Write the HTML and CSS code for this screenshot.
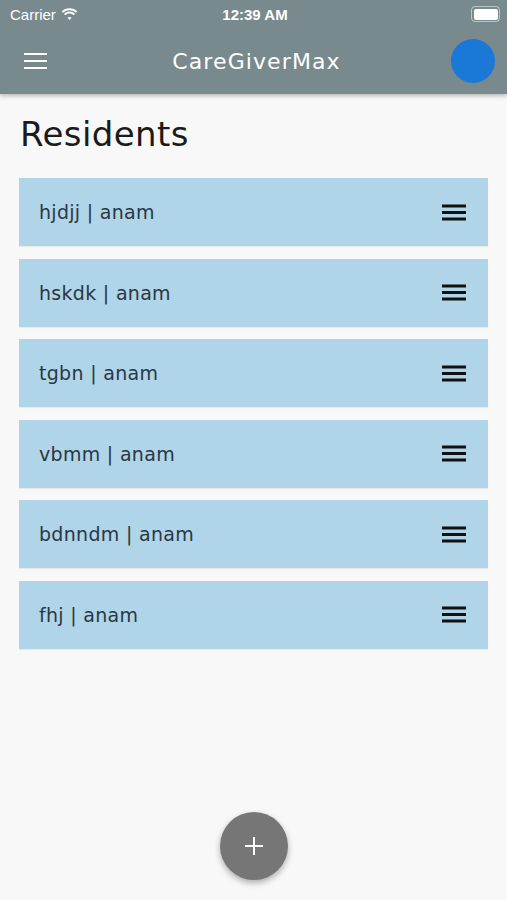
FILE: index.html
```html
<!doctype html>
<html>
  <head>
    <meta charset="utf-8">
    <title>CareGiverMax</title>
    <link rel="stylesheet" href="styles.css">
  </head>
  <body>
    <div class="top">
      <div class="status">
        <span class="carrier">Carrier
          <svg class="wifi" width="17" height="12" viewBox="0 0 17 12">
            <path d="M8.5 2.2c2.5 0 4.8 1 6.5 2.6l1.3-1.4C14.2 1.4 11.5 0.2 8.5 0.2S2.8 1.4 0.7 3.4L2 4.8C3.7 3.2 6 2.2 8.5 2.2z" fill="#fff"/>
            <path d="M8.5 5.6c1.6 0 3.1 0.6 4.2 1.7l1.3-1.4C12.6 4.5 10.6 3.6 8.5 3.6S4.4 4.5 3 5.9l1.3 1.4C5.4 6.2 6.9 5.6 8.5 5.6z" fill="#fff"/>
            <path d="M8.5 8.9c0.8 0 1.5 0.3 2 0.8l-2 2.2-2-2.2c0.5-0.5 1.2-0.8 2-0.8z" fill="#fff"/>
          </svg>
        </span>
        <span class="clock">12:39 AM</span>
        <span class="battery"><span class="cell"></span></span>
      </div>
      <div class="appbar">
        <svg class="menu" width="24" height="16" viewBox="0 0 24 16">
          <rect x="0" y="0" width="23" height="2" fill="#fff"/>
          <rect x="0" y="7" width="23" height="2" fill="#fff"/>
          <rect x="0" y="14" width="23" height="2" fill="#fff"/>
        </svg>
        <span class="brand">CareGiverMax</span>
        <span class="avatar"></span>
      </div>
    </div>

    <div class="content">
      <h1>Residents</h1>
      <div class="list">
        <div class="row"><span>hjdjj | anam</span><i class="drag"></i></div>
        <div class="row"><span>hskdk | anam</span><i class="drag"></i></div>
        <div class="row"><span>tgbn | anam</span><i class="drag"></i></div>
        <div class="row"><span>vbmm | anam</span><i class="drag"></i></div>
        <div class="row"><span>bdnndm | anam</span><i class="drag"></i></div>
        <div class="row"><span>fhj | anam</span><i class="drag"></i></div>
      </div>
    </div>

    <div class="fab">
      <svg width="20" height="20" viewBox="0 0 20 20">
        <rect x="9" y="1" width="2" height="18" fill="#fff"/>
        <rect x="1" y="9" width="18" height="2" fill="#fff"/>
      </svg>
    </div>
  </body>
</html>
```

FILE: styles.css
```css
body {
  margin: 0;
  width: 507px;
  height: 900px;
  background: #f8f8f8;
  font-family: "DejaVu Sans", "Noto Sans", sans-serif;
  position: relative;
  overflow: hidden;
}

.top {
  background: #788a8d;
  box-shadow: 0 2px 4px rgba(0, 0, 0, 0.25);
}

.status {
  height: 28px;
  display: flex;
  align-items: center;
  justify-content: space-between;
  padding: 0 7px 0 10px;
  color: #fff;
  font-family: "Liberation Sans", sans-serif;
  font-size: 15px;
}
.carrier {
  display: flex;
  align-items: center;
  gap: 5px;
  width: 90px;
}
.clock {
  font-weight: bold;
}
.battery {
  width: 90px;
  display: flex;
  justify-content: flex-end;
}
.battery .cell {
  width: 24px;
  height: 11px;
  border: 1.5px solid rgba(255, 255, 255, 0.5);
  border-radius: 4px;
  padding: 1.5px;
  box-sizing: content-box;
}
.battery .cell::before {
  content: "";
  display: block;
  width: 100%;
  height: 100%;
  background: #fff;
  border-radius: 2px;
}

.appbar {
  height: 66px;
  display: flex;
  align-items: center;
  justify-content: space-between;
  padding: 0 12px 0 24px;
}
.brand {
  color: #fff;
  font-size: 22px;
  letter-spacing: 1.1px;
  margin-left: 14px;
}
.avatar {
  width: 44px;
  height: 44px;
  border-radius: 50%;
  background: #1a78d6;
}

.content {
  padding: 0 19px;
}
h1 {
  margin: 20px 1px 24px;
  font-weight: normal;
  font-size: 34px;
  letter-spacing: 0.4px;
  color: #1b1b1b;
  line-height: 40px;
}
.list {
  display: flex;
  flex-direction: column;
  gap: 12.6px;
}
.row {
  height: 68px;
  background: #b0d4e8;
  display: flex;
  align-items: center;
  justify-content: space-between;
  padding: 0 22px 0 20px;
  color: #2a3744;
  font-size: 19px;
  letter-spacing: 0.3px;
  box-shadow: 0 1px 1px rgba(0, 0, 0, 0.06);
}
.drag {
  width: 24px;
  height: 3px;
  background: #111;
  box-shadow: 0 6.5px 0 #111, 0 -6.5px 0 #111;
}

.fab {
  position: absolute;
  left: 220px;
  top: 812px;
  width: 68px;
  height: 68px;
  border-radius: 50%;
  background: #767676;
  display: flex;
  align-items: center;
  justify-content: center;
  box-shadow: 0 3px 6px rgba(0, 0, 0, 0.3);
}
```
